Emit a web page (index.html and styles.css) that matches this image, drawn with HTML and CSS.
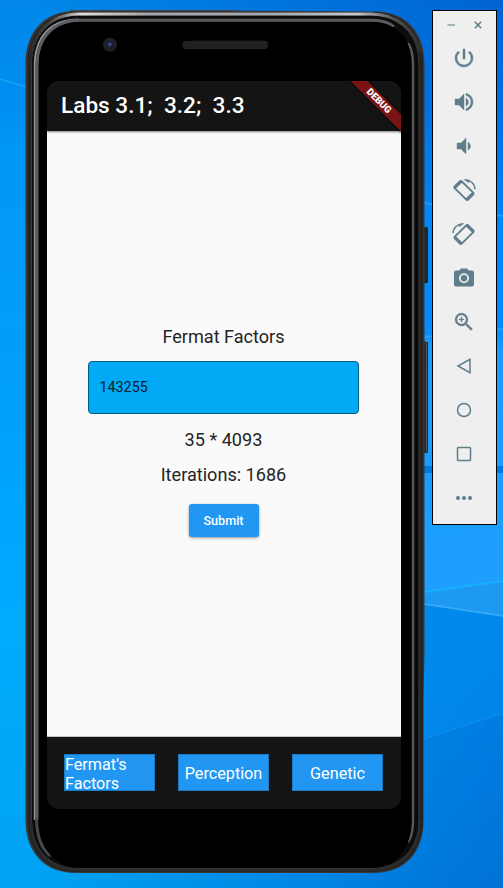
FILE: index.html
```html
<!DOCTYPE html>
<html lang="en">
<head>
<meta charset="utf-8">
<title>Labs 3.1; 3.2; 3.3</title>
<link rel="stylesheet" href="styles.css">
</head>
<body>
<div class="desktop">
  <svg class="backdrop" width="503" height="888" viewBox="0 0 503 888" aria-hidden="true">
    <defs>
      <linearGradient id="skyLeft" x2="0" y2="1">
        <stop offset="0" stop-color="#0087e7"/><stop offset=".1" stop-color="#008df0"/><stop offset=".18" stop-color="#0298f6"/><stop offset=".45" stop-color="#009ff8"/><stop offset=".67" stop-color="#00aaff"/><stop offset=".82" stop-color="#00a8f6"/><stop offset="1" stop-color="#00a2f2"/>
      </linearGradient>
      <linearGradient id="skyRight" x2="0" y2="1">
        <stop offset="0" stop-color="#0064d2"/><stop offset=".12" stop-color="#006edf"/><stop offset=".23" stop-color="#0080f4"/><stop offset=".36" stop-color="#008cff"/><stop offset=".4" stop-color="#1c9cff"/><stop offset=".65" stop-color="#1f9efd"/><stop offset=".68" stop-color="#0084e8"/><stop offset=".8" stop-color="#007ce0"/><stop offset="1" stop-color="#0072d8"/>
      </linearGradient>
      <linearGradient id="fade" x1=".08" x2="1">
        <stop offset="0" stop-color="#000"/><stop offset=".84" stop-color="#ddd"/><stop offset="1" stop-color="#fff"/>
      </linearGradient>
      <mask id="blend"><rect width="503" height="888" fill="url(#fade)"/></mask>
      <linearGradient id="silver" gradientUnits="userSpaceOnUse" x1="30" x2="424" y1="0" y2="0">
        <stop offset="0" stop-color="#2a2a2a"/><stop offset=".05" stop-color="#444"/><stop offset=".09" stop-color="#888"/><stop offset=".13" stop-color="#ddd"/><stop offset=".3" stop-color="#a4a7ab"/><stop offset=".6" stop-color="#a4a7ab"/><stop offset=".83" stop-color="#c4c9ce"/><stop offset=".92" stop-color="#555"/><stop offset="1" stop-color="#292929"/>
      </linearGradient>
      <pattern id="mesh" width="2" height="2" patternUnits="userSpaceOnUse"><rect width="2" height="2" fill="#1c1e1d"/><rect width="1" height="1" fill="#2b2c2b"/></pattern>
    </defs>
    <rect width="503" height="888" fill="url(#skyLeft)"/>
    <rect width="503" height="888" fill="url(#skyRight)" mask="url(#blend)"/>
    <path d="M0 79L26 87" stroke="#32adf8" stroke-width="1.5" opacity=".6"/>
    <path d="M0 608L26 605V650L0 648Z" fill="#05acff" opacity=".4"/>
    <path d="M424 337L503 329V216L424 203Z" fill="#0088ff" opacity=".5"/>
    <path d="M424 203L503 216M424 337L503 329" stroke="#2dabff" stroke-width="2" opacity=".65"/>
    <path d="M424 466H503V473H424Z" fill="#0079df"/>
    <path d="M424 540H503V581L424 592Z" fill="#1f9efd"/>
    <path d="M424 592L503 581V616L424 604Z" fill="#1d99f2"/>
    <path d="M424 592L503 581" stroke="#16b1ff" stroke-width="2"/>
    <path d="M424 604L503 616" stroke="#38a8f5" stroke-width="2"/>
    <path d="M424 605L503 617V714L424 739Z" fill="#008bec" opacity=".65"/>
    <path d="M424 739L503 713" stroke="#168ceb"/>
    <rect x="422" y="227" width="6" height="56" rx="1" fill="#272727"/>
    <rect x="422" y="341" width="6" height="112" rx="1" fill="#292929"/>
    <path d="M426.5 343V452" stroke="#555"/>
    <path d="M425 341.5H428" stroke="#777"/>
    <path d="M70 10H235V14H70Z" fill="#405267"/>
    <path d="M25.5 65C25.5 30 45 10.5 79 10.5H230L375 11.5C407 12 424.5 32 424.5 65V650L423.5 700V820C423.5 852 406 873 373 873H76C44 873 25.5 852 25.5 820Z" fill="#3b3634"/>
    <path d="M27.5 65C27.5 32 46 12 79 12H375C405 13 423 33 423 65V820C423 851 405 872 373 872H76C45 872 27.5 851 27.5 820Z" fill="#242424"/>
    <path d="M31.5 820V65C31.5 34 48 15 79 15H371C402 15 419 36 419 65V820C419 847 402 868.5 371 868.5H78C48 868.5 31.5 847 31.5 820Z" fill="#0c0c0c" stroke="#3a3a3a"/>
    <path d="M30 65C30.5 36 48 14 79 14H371C396 14 415 29 420.5 53" fill="none" stroke="url(#silver)" stroke-width="3.2"/>
    <path d="M34.7 820V65C35 36 51 19.5 79 19.5" fill="none" stroke="#94959b" stroke-width="1.8"/>
    <path d="M37.2 820V65C37.2 38 53 20.3 81 20.3H374C385 21 391 24 394 27" fill="none" stroke="#5b5c62" stroke-width="3"/>
    <path d="M36.5 819C37 838 42 850 51 856" fill="none" stroke="#45474c" stroke-width="3"/>
    <path d="M408 43C412 49 413 56 413 65V820C413 831 411 838 408 842" fill="none" stroke="#57585d" stroke-width="2.5"/>
    <path d="M416.5 65V820" stroke="#080808" stroke-width="1.5"/>
    <path d="M38.7 65C38.7 39 54 22 81 22H371C398 22 411.5 39 411.5 65V820C411.5 847 398 868 371 868H81C54 868 38.7 847 38.7 820Z" fill="#000"/>
    <path d="M31 820C31 850 49 870 78 870H371C401 870 420 850 420 820" fill="none" stroke="#2b2b2b" stroke-width="2.5"/>
    <circle cx="110" cy="44.7" r="7" fill="#202122"/><circle cx="110" cy="44.7" r="4" fill="#151c31"/><circle cx="109.5" cy="44.5" r="2.4" fill="#27355d"/><circle cx="110" cy="44" r="1" fill="#5366a2"/>
    <rect x="182.5" y="40.7" width="85.5" height="8.2" rx="3.5" fill="url(#mesh)"/>
  </svg>

  <main class="screen">
    <header class="appbar">
      <h1 class="title">Labs 3.1;&nbsp; 3.2;&nbsp; 3.3</h1>
      <span class="debug">DEBUG</span>
    </header>
    <section class="content">
      <p class="text heading">Fermat Factors</p>
      <div class="field">143255</div>
      <p class="text factors">35 * 4093</p>
      <p class="text iterations">Iterations: 1686</p>
      <button class="submit" type="button">Submit</button>
    </section>
    <nav class="tabs">
      <a class="tab wrap">Fermat's<br>Factors</a>
      <a class="tab">Perception</a>
      <a class="tab">Genetic</a>
    </nav>
  </main>

  <aside class="toolbar">
    <div class="window">
      <svg width="10" height="10" viewBox="0 0 10 10"><path d="M1.5 5H9" stroke="#97aaaf" stroke-width="1.7"/></svg>
      <svg width="10" height="10" viewBox="0 0 10 10"><path d="M1.8 1.8L8.2 8.2M8.2 1.8L1.8 8.2" stroke="#5f7c88" stroke-width="1.5"/></svg>
    </div>
    <svg class="tool" viewBox="0 0 24 24"><path fill="#607d8b" stroke="#607d8b" stroke-width=".5" d="M13 3h-2v10h2V3zm4.83 2.17l-1.42 1.42A6.92 6.92 0 0 1 19 12c0 3.87-3.13 7-7 7A6.995 6.995 0 0 1 7.58 6.58L6.17 5.17A8.932 8.932 0 0 0 3 12a9 9 0 0 0 18 0c0-2.74-1.23-5.18-3.17-6.83z"/></svg>
    <svg class="tool" viewBox="0 0 24 24"><path fill="#607d8b" stroke="#607d8b" stroke-width=".4" d="M3 9v6h4l5 5V4L7 9H3zm13.5 3A4.5 4.5 0 0 0 14 7.97v8.05c1.48-.73 2.5-2.25 2.5-4.02zM14 3.23v2.06c2.89.86 5 3.54 5 6.71s-2.11 5.85-5 6.71v2.06c4.01-.91 7-4.49 7-8.77s-2.99-7.86-7-8.77z"/></svg>
    <svg class="tool" viewBox="0 0 24 24"><path fill="#607d8b" stroke="#607d8b" stroke-width=".4" d="M18.5 12A4.5 4.5 0 0 0 16 7.97v8.05c1.48-.73 2.5-2.25 2.5-4.02zM5 9v6h4l5 5V4L9 9H5z"/></svg>
    <svg class="tool" viewBox="0 0 24 24"><g fill="none" stroke="#607d8b"><path d="M9.3 3L21.5 14.9L14.6 21.9L2.4 9.9Z" stroke-width="1.9" stroke-linejoin="round"/><path d="M2.2 9.9L9.2 3M14.6 22L21.6 15" stroke-width="3.2"/><path d="M12.5 1.7C18 1.5 22.7 5.5 23 11.3M13 1.5L17 4.5" stroke-width="1.4"/></g></svg>
    <svg class="tool" viewBox="0 0 24 24"><g fill="none" stroke="#607d8b"><path d="M14.7 3L2.5 14.9L9.4 21.9L21.6 9.9Z" stroke-width="1.9" stroke-linejoin="round"/><path d="M21.8 9.9L14.8 3M9.4 22L2.4 15" stroke-width="3.2"/><path d="M11.5 1.7C6 1.5 1.3 5.5 1 11.3M11 1.5L7 4.5" stroke-width="1.4"/></g></svg>
    <svg class="tool" viewBox="0 0 24 24"><path fill="#607d8b" d="M9 2.5L7.17 4.5H4c-1.1 0-2 .9-2 2v12c0 1.1.9 2 2 2h16c1.1 0 2-.9 2-2V6.500c0-1.1-.9-2-2-2h-3.17L15 2.500z"/><circle cx="12" cy="12.3" r="4.1" fill="#607d8b" stroke="#efefef" stroke-width="1.8"/></svg>
    <svg class="tool" viewBox="0 0 24 24"><path fill="#607d8b" stroke="#607d8b" stroke-width=".3" d="M15.5 14h-.79l-.28-.27A6.471 6.471 0 0 0 16 9.5 6.5 6.5 0 1 0 9.5 16c1.61 0 3.09-.59 4.23-1.57l.27.28v.79l5 4.99L20.49 19l-4.99-5zm-6 0a4.5 4.5 0 1 1 0-9 4.5 4.5 0 0 1 0 9zM10 7H9v2H7v1h2v2h1v-2h2V9h-2V7z"/></svg>
    <svg class="tool" viewBox="0 0 24 24"><path d="M18 5.3V18.7L6 12Z" fill="none" stroke="#607d8b" stroke-width="1.5"/></svg>
    <svg class="tool" viewBox="0 0 24 24"><circle cx="12" cy="12" r="6.5" fill="none" stroke="#607d8b" stroke-width="1.5"/></svg>
    <svg class="tool" viewBox="0 0 24 24"><rect x="5.5" y="5.5" width="13" height="13" rx=".8" fill="none" stroke="#607d8b" stroke-width="1.5"/></svg>
    <svg class="tool" viewBox="0 0 24 24"><g fill="#607d8b"><circle cx="6" cy="12" r="2"/><circle cx="12" cy="12" r="2"/><circle cx="18" cy="12" r="2"/></g></svg>
  </aside>
</div>
</body>
</html>
```
FILE: styles.css
```css
* { box-sizing: border-box; }

body {
  margin: 0;
  font-family: Roboto, "Liberation Sans", sans-serif;
}

.desktop {
  position: relative;
  display: flex;
  align-items: flex-start;
  width: 503px;
  height: 888px;
  overflow: hidden;
  background: #0090ee;
}

.backdrop {
  position: absolute;
  inset: 0;
}

.screen {
  position: relative;
  display: flex;
  flex-direction: column;
  width: 354px;
  height: 728px;
  margin: 81px 0 0 47px;
  border-radius: 12px;
  overflow: hidden;
}

.appbar {
  position: relative;
  z-index: 1;
  display: flex;
  align-items: center;
  height: 50px;
  padding: 0 0 1px 14px;
  background: #141414;
  box-shadow: 0 1px 2px rgba(0, 0, 0, .5);
}

.title {
  margin: 0;
  color: #fff;
  font-size: 22.6px;
  font-weight: 500;
  line-height: 28px;
}

.debug {
  position: absolute;
  top: 14px;
  right: -28px;
  width: 100px;
  height: 12px;
  transform: rotate(45deg);
  background: #7a1414;
  box-shadow: 0 0 3px #000;
  color: #fff;
  font-size: 9.6px;
  font-weight: 900;
  line-height: 12px;
  text-align: center;
}

/* The bar clips the ribbon at its own lower edge. */
.appbar { clip-path: inset(0 0 -4px 0); }

.content {
  display: flex;
  flex-direction: column;
  align-items: center;
  height: 606px;
  padding: 194px 1px 0 0;
  border-bottom: 1px solid #c4c4c4;
  background: #fafafa;
}

.text {
  margin: 0;
  color: #242424;
  font-size: 18.1px;
  line-height: 24px;
}

.field {
  width: 271px;
  height: 53px;
  margin-top: 12px;
  padding-left: 10.5px;
  border: 1px solid #075a87;
  border-radius: 4px;
  background: #02a9f4;
  color: #08222f;
  font-size: 14.3px;
  line-height: 50px;
}

.factors { margin-top: 14px; }

.iterations { margin-top: 11px; }

.submit {
  width: 70px;
  height: 33px;
  margin-top: 17px;
  padding: 0;
  border: 0;
  border-radius: 3px;
  background: #2196f3;
  box-shadow: 0 1px 3px rgba(0, 0, 0, .4);
  color: #fff;
  font: 500 12.6px/33px Roboto, sans-serif;
}

.tabs {
  display: flex;
  justify-content: space-between;
  height: 72px;
  padding: 17px 18px 0 17px;
  background: #141414;
}

.tab {
  display: flex;
  align-items: center;
  justify-content: center;
  width: 91px;
  height: 37px;
  padding-top: 1px;
  border: 1px solid #1c7ac5;
  background: #2196f3;
  color: #fff;
  font-size: 16.2px;
  line-height: 19px;
}

.wrap {
  justify-content: flex-start;
  padding-top: 3px;
}

.toolbar {
  position: relative;
  display: flex;
  flex-direction: column;
  align-items: center;
  width: 65px;
  height: 515px;
  margin: 10px 0 0 31px;
  padding-right: 1px;
  border: 1px solid #000;
  background: #efefef;
}

.window {
  display: flex;
  gap: 17px;
  height: 19px;
  padding-top: 9px;
  margin-bottom: 16px;
}

.window svg { flex: none; }

.tool {
  flex: none;
  width: 24px;
  height: 24px;
  margin-bottom: 20px;
}
```
